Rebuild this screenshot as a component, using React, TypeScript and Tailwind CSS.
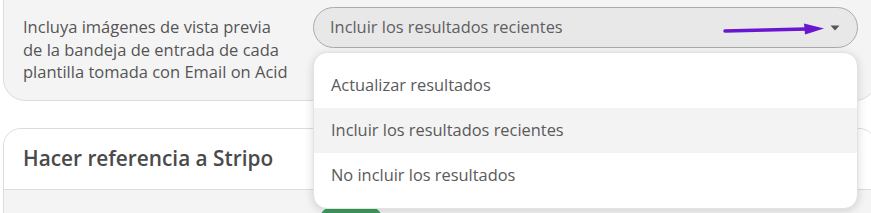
import React from "react";

const font = { fontFamily: '"Open Sans", "Noto Sans", sans-serif' };

export default function App() {
  return (
    <div className="relative h-[213px] w-[871px] overflow-hidden bg-white" style={font}>
      {/* Top card */}
      <div className="-mt-5 ml-[3px] flex h-[121px] w-[874px] shrink-0 rounded-b-[22px] border border-[#dcdcdc] bg-[#f4f4f4]">
        <div className="w-[309px] shrink-0 pl-[19px] pt-[35px]">
          <p className="w-[268px] text-[16.5px] leading-[22.5px] text-[#555]">
            Incluya imágenes de vista previa de la bandeja de entrada de cada plantilla tomada con Email on Acid
          </p>
        </div>
        <div className="shrink-0 pt-[26px]">
          <div className="flex h-[41px] w-[545px] items-center justify-between rounded-full border border-[#ababab] bg-[#e8e8e8] pl-[16px] pr-[17px]">
            <span className="text-[16.4px] text-[#5f5f5f]">Incluir los resultados recientes</span>
            <svg width="10" height="6" viewBox="0 0 10 6">
              <path d="M0.5 0.5 L9.5 0.5 L5 5.5 Z" fill="#555" />
            </svg>
          </div>
        </div>
      </div>

      {/* Second card */}
      <div className="ml-[3px] mt-[27px] w-[874px] rounded-t-[18px] border border-[#dcdcdc]">
        <div className="flex h-[61px] items-center rounded-t-[18px] border-b border-[#dcdcdc] bg-white pl-[19px]">
          <span className="text-[20.8px] font-semibold text-[#4a4a4a]">Hacer referencia a Stripo</span>
        </div>
        <div className="h-[60px] bg-[#f4f4f4] pl-[316px] pt-[17px]">
          <div className="h-[24px] w-[62px] rounded-full bg-[#3c9c5c]" />
        </div>
      </div>

      {/* Annotation arrow */}
      <svg className="absolute left-[722px] top-[21px]" width="104" height="16" viewBox="0 0 104 16">
        <path d="M3 10 L84 8" stroke="#6a16cf" strokeWidth="3.5" strokeLinecap="round" />
        <path d="M82 2.5 L102 7.5 L83 13.5 Z" fill="#6a16cf" />
      </svg>

      {/* Dropdown menu */}
      <div className="absolute left-[313px] top-[52px] h-[157px] w-[545px] rounded-[14px] border border-[#e2e2e2] bg-white py-[10px] shadow-[0_2px_10px_rgba(0,0,0,0.15)]">
        <div className="flex h-[45px] items-center pl-[17px] text-[16.4px] text-[#5a5a5a]">Actualizar resultados</div>
        <div className="flex h-[45px] items-center bg-[#f3f3f3] pl-[17px] text-[16.4px] text-[#5a5a5a]">
          Incluir los resultados recientes
        </div>
        <div className="flex h-[45px] items-center pl-[17px] text-[16.4px] text-[#5a5a5a]">No incluir los resultados</div>
      </div>
    </div>
  );
}
